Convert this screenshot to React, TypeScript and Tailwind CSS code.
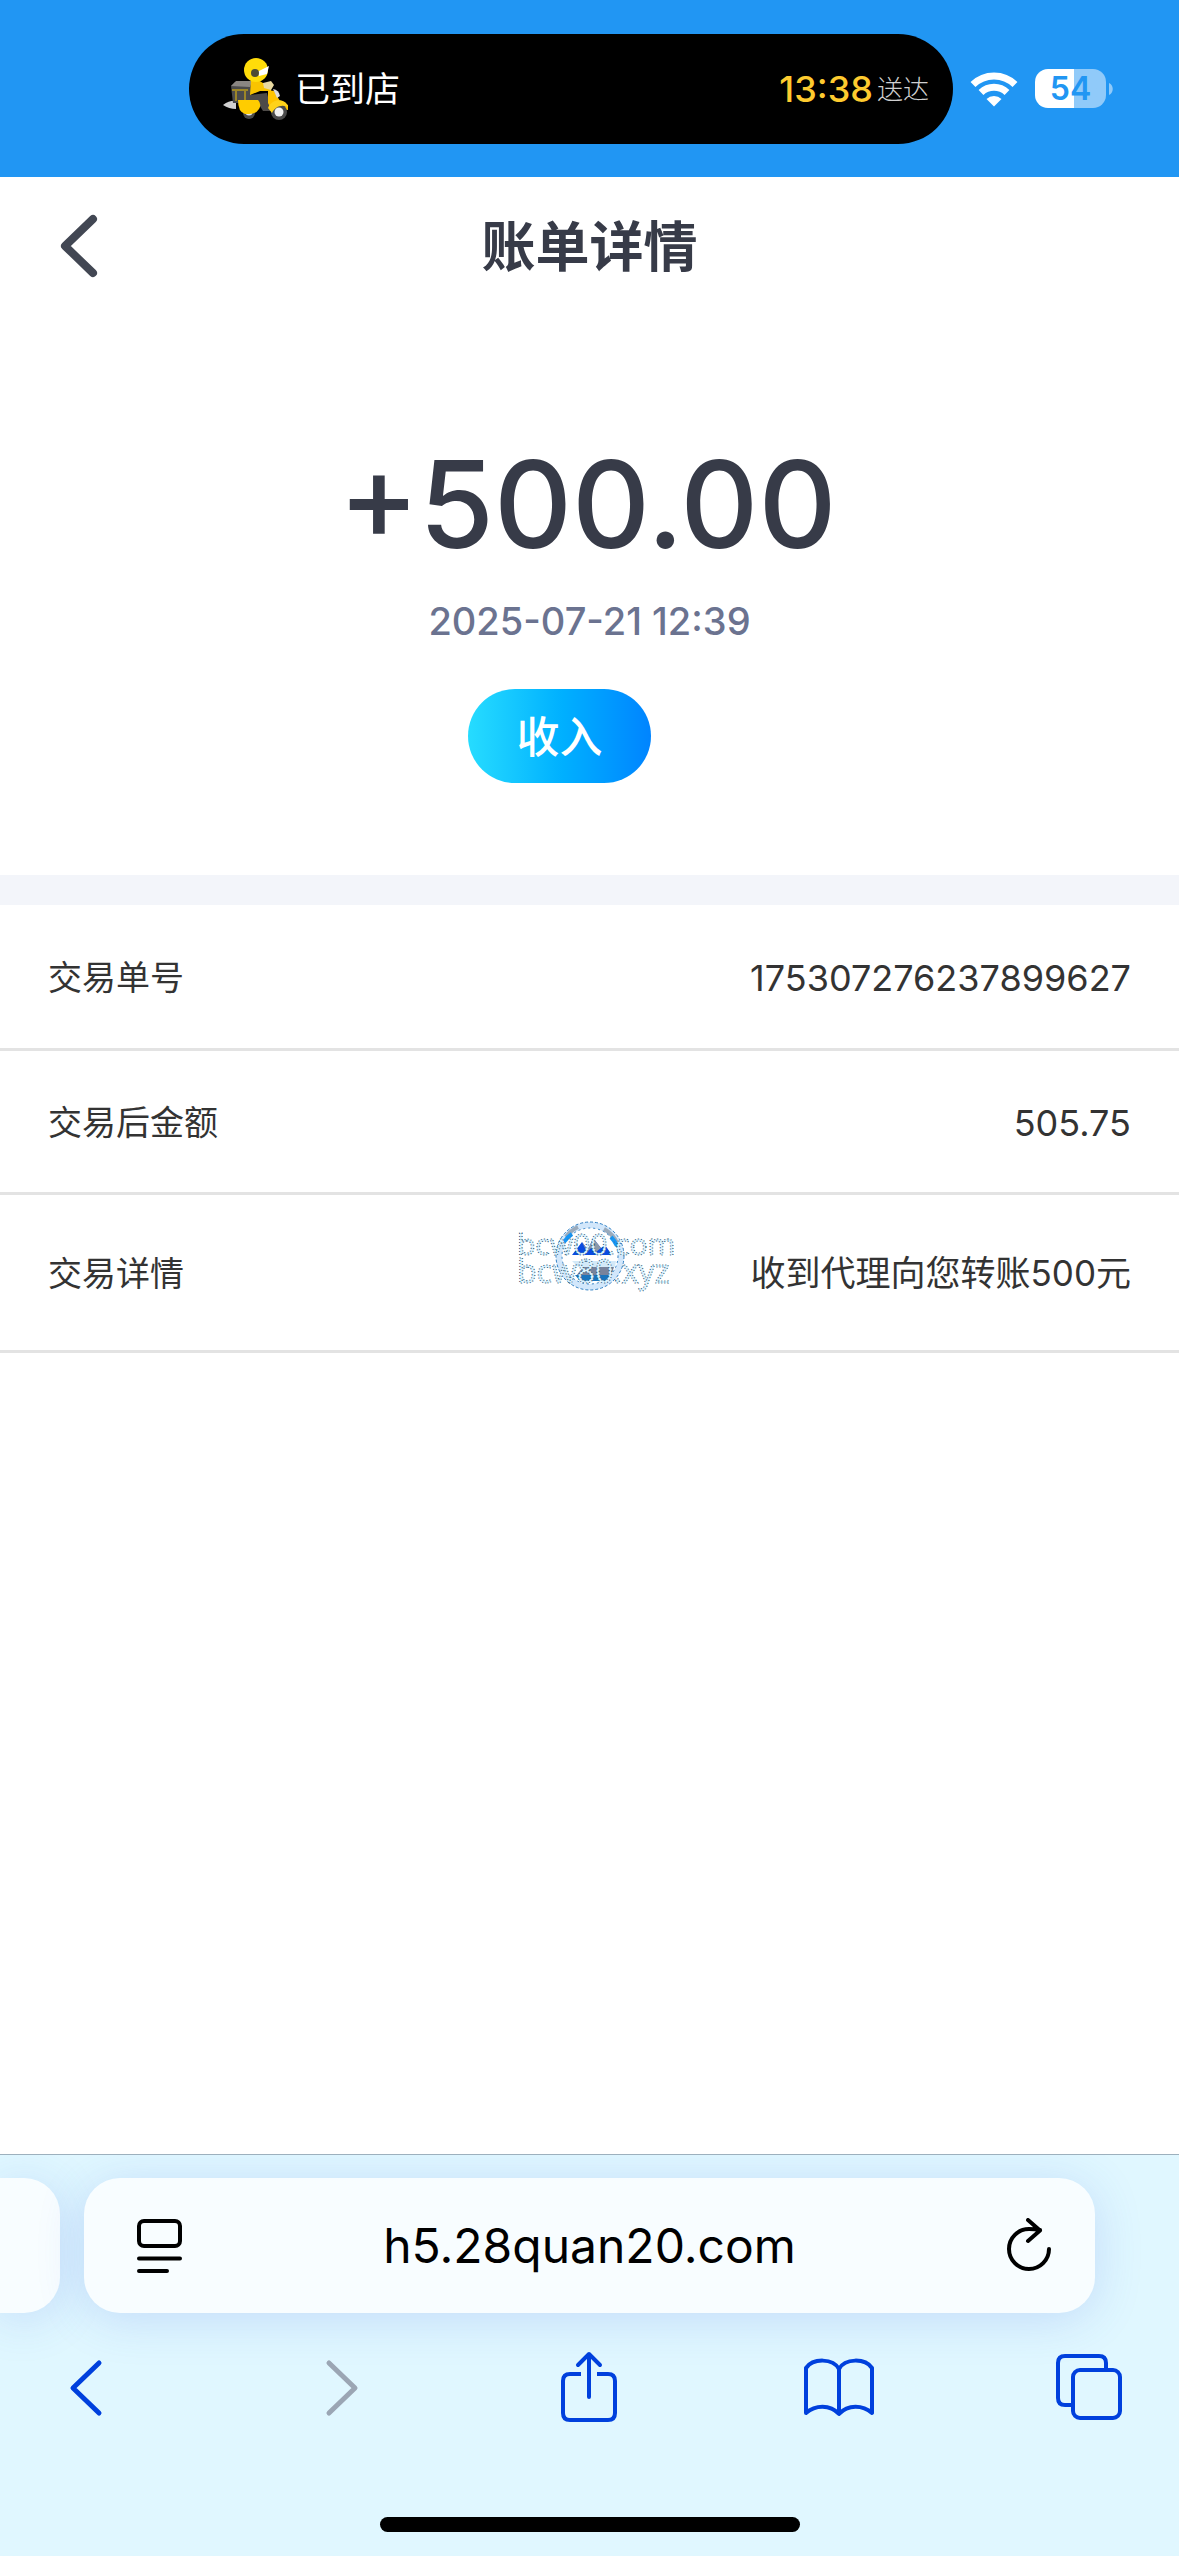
import React from "react";

const rows = [
  { label: "交易单号", value: "175307276237899627", height: "h-[146px]", size: "text-[36px]" },
  { label: "交易后金额", value: "505.75", height: "h-[144px]", size: "text-[36px]" },
  { label: "交易详情", value: "收到代理向您转账500元", height: "h-[158px]", size: "text-[35px]" },
];

function Rider() {
  return (
    <svg viewBox="0 0 66 62" className="h-[62px] w-[66px] shrink-0" aria-hidden="true">
      <path d="M0 47q7-5 13-4v8q-7 0-13-4z" fill="#d0d0d0" />
      <path d="M8 28l4-4h16v21H10z" fill="#4b4b4b" />
      <path d="M8 28l5-5h16l-2 6z" fill="#8a8682" />
      <path d="M9 32h16M13 33v10M22 33v10" stroke="#b89a1c" strokeWidth="1.500" fill="none" />
      <circle cx="26" cy="55" r="6" fill="#4a4a4a" />
      <circle cx="26" cy="54" r="3.500" fill="#e8e8e8" />
      <path d="M26 37l18-2 3 12h7v6H40l-5-8-8-2z" fill="#4d4a48" />
      <path d="M15 42h20q4 4 1 9-3 5-10 5h-4q-7-2-7-14z" fill="#ffcc00" />
      <path d="M28 22q6-2 12 3l8 1v7H37l-10 4z" fill="#f9c400" />
      <path d="M40 25l8-2 3 4-3 5-7-2z" fill="#e9d9a0" />
      <path d="M45 32l6 1 6 10 8 4v5l-8-1-7 4-5-10z" fill="#ffc400" />
      <path d="M50 31q6 1 7 7l-3 2z" fill="#dcdcdc" />
      <circle cx="56" cy="54" r="8" fill="#4a4a4a" />
      <circle cx="56" cy="54" r="4.500" fill="#f2f2f2" />
      <path d="M45 50c4-10 18-10 20-1-7-3-13 0-16 6z" fill="#ffd21a" />
      <circle cx="33" cy="12" r="12" fill="#ffdc0a" />
      <path d="M34 14 46 8l-2 8-8 2z" fill="#fff" />
      <circle cx="32" cy="15" r="4" fill="#4d4a35" />
    </svg>
  );
}

function StatusBar() {
  return (
    <header className="flex h-[177px] items-center bg-[#2196f3] pr-[66px]">
      <div className="ml-[189px] flex h-[110px] flex-1 items-center rounded-full bg-black pr-[24px] pl-[34px]">
        <Rider />
        <span className="ml-[6px] pt-[2px] text-[35px] text-white">已到店</span>
        <span className="ml-auto text-[36px] font-medium text-[#fecb2f]">13:38</span>
        <span className="ml-[4px] pt-[2px] text-[26px] font-light text-[#d0d0d0]">送达</span>
      </div>
      <svg viewBox="0 0 48 36" className="ml-[17px] h-[36px] w-[48px] shrink-0" role="img" aria-label="Wi-Fi">
        <g fill="none" stroke="#fff" strokeWidth="7">
          <path d="M3 13.500a30 30 0 0 1 42 0" />
          <path d="M11 21.500a19 19 0 0 1 26 0" />
        </g>
        <path d="M24 35.500 16.500 28a11 11 0 0 1 15 0z" fill="#fff" />
      </svg>
      <div className="ml-[17px] flex shrink-0 items-center gap-[3px]">
        <div className="flex h-[39px] w-[71px] items-center justify-center rounded-[13px] bg-linear-to-r from-white from-55% to-[#90caf9] to-55% text-[32px] font-semibold text-[#2196f3]">
          54
        </div>
        <svg viewBox="0 0 4 12" className="h-[12px] w-[4px]" aria-hidden="true">
          <path d="M0 0c5 2 5 10 0 12z" fill="#90caf9" />
        </svg>
      </div>
    </header>
  );
}

function Watermark() {
  return (
    <svg viewBox="0 0 164 72" className="absolute top-[25px] left-[516px] h-[72px] w-[164px]" aria-hidden="true">
      <circle cx="74" cy="36" r="31" fill="#fff" stroke="#d2e7fb" strokeWidth="6" />
      <path d="M50 17a30 30 0 0 1 12-10M88 9a30 30 0 0 1 13 14" fill="none" stroke="#9aaabb" strokeWidth="4" />
      <path d="M48 22a30 30 0 0 1 8-8M95 17a30 30 0 0 1 6 9" fill="none" stroke="#1596f5" strokeWidth="4" />
      <circle cx="74" cy="36" r="34" fill="none" stroke="#2f7fc4" strokeDasharray="3 2" />
      <circle cx="74" cy="36" r="28" fill="none" stroke="#2f7fc4" strokeDasharray="2 3" />
      <path d="M56 35 66 22l6 8 5-12 8 10 4-3 7 10z" fill="#0a4be0" />
      <path d="M66 22l6 8 5-12 8 10-5 4-5-4-4 4z" fill="#8d99a8" />
      <path d="M56 41h44l-1 6H62z" fill="#d3e9f8" />
      <path d="M67 47h31l-3 9H60z" fill="#78839c" />
      <path d="M59 55h36l-6 6H64z" fill="#1a74bd" />
      <text fontFamily="Open Sans" fill="#dcf3ff" stroke="#20506e" strokeWidth="1" strokeDasharray="1 2">
        <tspan x="1" y="35" fontSize="30">bcw00.com</tspan>
        <tspan x="1" y="63" fontSize="32">bcw80.xyz</tspan>
      </text>
    </svg>
  );
}

function BrowserBar() {
  return (
    <footer className="flex h-[402px] flex-col overflow-hidden border-t border-[#9db0bd] bg-[#e0f7ff]">
      <div className="mt-[23px] flex gap-[24px] pr-[84px]">
        <div className="h-[135px] w-[60px] rounded-r-[36px] bg-[#f8fdff] shadow-[0_6px_48px_rgba(60,100,220,0.18)]" />
        <div className="flex h-[135px] flex-1 items-center justify-between rounded-[36px] bg-[#f8fdff] pr-[43px] pl-[52px] shadow-[0_6px_48px_rgba(60,100,220,0.18)]">
          <button aria-label="Page menu">
            <svg viewBox="0 0 46 54" className="h-[54px] w-[46px]" fill="none" stroke="#000" strokeWidth="4" strokeLinecap="round">
              <rect x="3" y="2" width="41" height="25" rx="5" />
              <path d="M3 39.500h41M3 52h28" />
            </svg>
          </button>
          <span className="mr-[9px] text-[48px] text-black">h5.28quan20.com</span>
          <button aria-label="Reload">
            <svg viewBox="0 0 46 56" className="h-[56px] w-[46px]" fill="none" stroke="#000" strokeWidth="4" strokeLinecap="round" strokeLinejoin="round">
              <path d="M43 31a20 20 0 1 1-20-20q6 0 11 1M22 2l12 10.500L22 23" />
            </svg>
          </button>
        </div>
      </div>
      <nav className="mt-[34px] flex h-[80px] items-center justify-between pr-[54px] pl-[52px] text-[#0040dd]">
        <button aria-label="Back" className="flex w-[72px] justify-center pr-1">
          <svg viewBox="0 0 36 64" className="h-[64px] w-[36px]" fill="none" stroke="currentColor" strokeWidth="5" strokeLinecap="round" strokeLinejoin="round">
            <path d="M31 8 5 33l26 25" />
          </svg>
        </button>
        <button aria-label="Forward" className="flex w-[72px] justify-center pl-2 text-[#9ba6b4]">
          <svg viewBox="0 0 36 64" className="h-[64px] w-[36px]" fill="none" stroke="currentColor" strokeWidth="5" strokeLinecap="round" strokeLinejoin="round">
            <path d="m5 8 26 25L5 58" />
          </svg>
        </button>
        <button aria-label="Share" className="flex w-[72px] justify-center">
          <svg viewBox="0 0 60 72" className="h-[72px] w-[60px]" fill="none" stroke="currentColor" strokeWidth="4" strokeLinejoin="round">
            <path d="M22 23H11q-7 0-7 7v32q0 7 7 7h38q7 0 7-7V30q0-7-7-7H38" />
            <path d="M30 46V3M19 14 30 3l11 11" strokeLinecap="round" />
          </svg>
        </button>
        <button aria-label="Bookmarks" className="flex w-[72px] justify-center">
          <svg viewBox="0 0 72 60" className="h-[60px] w-[72px]" fill="none" stroke="currentColor" strokeWidth="4" strokeLinejoin="round">
            <path d="M36 12C30 1 10 1 3 11v45c9-8 24-9 33 1 9-10 24-9 33-1V11C62 1 42 1 36 12zv45" />
          </svg>
        </button>
        <button aria-label="Tabs" className="flex w-[72px] justify-center">
          <svg viewBox="0 0 68 68" className="h-[68px] w-[68px]" fill="none" stroke="currentColor" strokeWidth="4">
            <path d="M17 52h-7q-7 0-7-7V10q0-7 7-7h34q7 0 7 7v7" />
            <rect x="18" y="17" width="47" height="48" rx="7" />
          </svg>
        </button>
      </nav>
      <div className="mx-auto mt-auto mb-[24px] h-[15px] w-[420px] shrink-0 rounded-full bg-black" />
    </footer>
  );
}

export default function App() {
  return (
    <div className="flex min-h-screen flex-col bg-white font-['Inter','Noto_Sans_CJK_SC',sans-serif]">
      <StatusBar />
      <div className="grid h-[138px] grid-cols-[1fr_auto_1fr] items-center px-[58px]">
        <button aria-label="返回" className="justify-self-start">
          <svg viewBox="0 0 40 64" className="h-[64px] w-[40px]" fill="none" stroke="#424753" strokeWidth="8" strokeLinecap="round" strokeLinejoin="round">
            <path d="M35 5 7 32l28 27" />
          </svg>
        </button>
        <h1 className="pt-[4px] text-[54px] leading-[80px] font-bold text-[#373b48]">账单详情</h1>
      </div>
      <main className="flex flex-1 flex-col">
        <section className="flex flex-col items-center border-b-[30px] border-[#f3f5fa] pt-[115px] pb-[92px]">
          <div className="pr-[4px] text-[121px] leading-[148px] font-medium text-[#373b48]">+500.00</div>
          <time className="mt-[18px] text-[38px] leading-[50px] font-medium text-[#6b7390]">2025-07-21 12:39</time>
          <div className="mt-[43px] mr-[60px] flex h-[94px] w-[183px] items-center justify-center rounded-full bg-linear-to-r from-[#26dcff] to-[#0084ff] pt-[2px] text-[43px] font-medium text-white">
            收入
          </div>
        </section>
        <dl className="text-[#333333]">
          {rows.map((row) => (
            <div key={row.label} className={`relative flex items-center justify-between border-b-[3px] border-[#e3e3e3] px-[48px] pt-[2px] ${row.height}`}>
              <dt className="text-[34px]">{row.label}</dt>
              {row.label === "交易详情" && <Watermark />}
              <dd className={row.size}>{row.value}</dd>
            </div>
          ))}
        </dl>
      </main>
      <BrowserBar />
    </div>
  );
}
